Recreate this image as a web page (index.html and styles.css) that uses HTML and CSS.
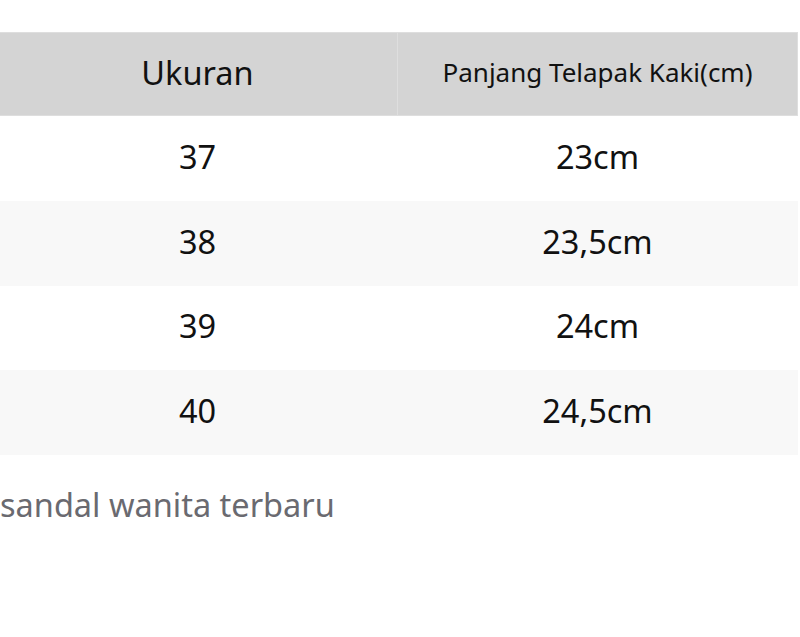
FILE: index.html
```html
<!DOCTYPE html>
<html lang="id">
<head>
<meta charset="utf-8">
<title>Ukuran</title>
<link rel="stylesheet" href="styles.css">
</head>
<body>
<div class="page">
  <table class="size-table">
    <thead>
      <tr>
        <th class="col-size">Ukuran</th>
        <th class="col-length">Panjang Telapak Kaki(cm)</th>
      </tr>
    </thead>
    <tbody>
      <tr><td>37</td><td>23cm</td></tr>
      <tr><td>38</td><td>23,5cm</td></tr>
      <tr><td>39</td><td>24cm</td></tr>
      <tr><td>40</td><td>24,5cm</td></tr>
    </tbody>
  </table>
  <p class="caption">sandal wanita terbaru</p>
</div>
</body>
</html>
```

FILE: styles.css
```css
html, body {
  margin: 0;
  padding: 0;
  background: #ffffff;
}
body {
  font-family: "Noto Sans", "Open Sans", sans-serif;
  color: #111111;
  overflow: hidden;
}
.page {
  padding-top: 32px;
}
.size-table {
  margin-left: -3px;
  width: 801px;
  border-collapse: collapse;
  table-layout: fixed;
}
.size-table th {
  background: #d4d4d4;
  border: 1px solid #dedede;
  height: 78px;
  padding: 0 0 4px 0;
  font-weight: 400;
  text-align: center;
  vertical-align: middle;
}
.col-size {
  width: 399px;
  font-size: 32.5px;
}
.col-length {
  font-size: 26px;
}
.size-table td {
  height: 80.75px;
  padding: 0 0 4px 0;
  text-align: center;
  vertical-align: middle;
  font-size: 32.5px;
}
.size-table tbody tr:nth-child(even) td {
  background: #f8f8f8;
}
.caption {
  margin: 27px 0 0 0;
  font-size: 32.5px;
  line-height: 45px;
  color: #6a6a70;
}
```
